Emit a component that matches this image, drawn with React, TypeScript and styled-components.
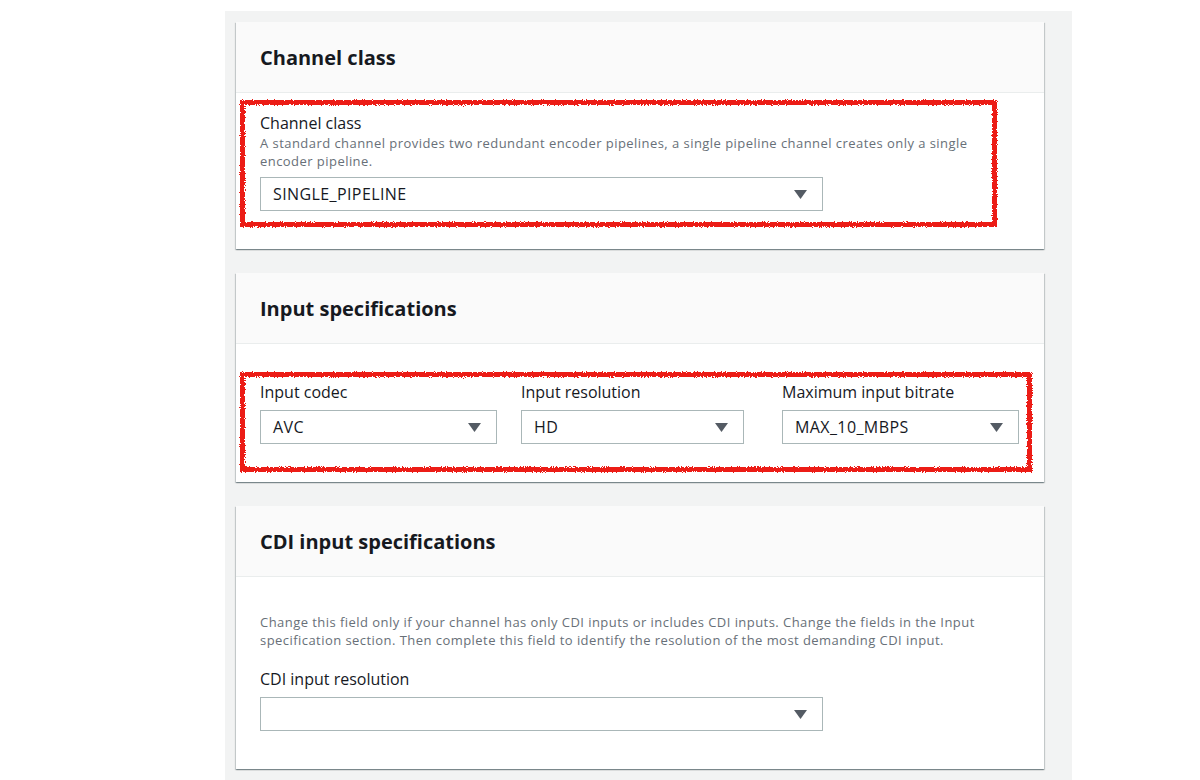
import React from "react";
import styled, { createGlobalStyle } from "styled-components";

const GlobalStyle = createGlobalStyle`
  body {
    margin: 0;
    background: #ffffff;
    font-family: "Open Sans", "Noto Sans", sans-serif;
    color: #16191f;
  }
`;

const Page = styled.div`
  display: flex;
  padding: 11px 0 0 225px;
`;

const Panel = styled.div`
  width: 847px;
  box-sizing: border-box;
  background: #f2f3f3;
  padding: 11px 28px 24px 11px;
  display: flex;
  flex-direction: column;
  gap: 24px;
`;

const Card = styled.section`
  background: #ffffff;
  box-shadow: 0 1px 1px 0 rgba(0, 28, 36, 0.3),
    1px 1px 1px 0 rgba(0, 28, 36, 0.15), -1px 1px 1px 0 rgba(0, 28, 36, 0.15);
`;

const CardHeader = styled.header`
  height: 71px;
  box-sizing: border-box;
  display: flex;
  align-items: center;
  padding: 0 24px;
  background: #fafafa;
  border-bottom: 1px solid #eaeded;
`;

const Title = styled.h2`
  margin: 0;
  font-size: 20px;
  font-weight: 700;
  color: #16191f;
`;

const CardBody = styled.div<{ $pad: string }>`
  padding: ${(p) => p.$pad};
`;

const Highlight = styled.div<{ $pad: string }>`
  position: relative;
  padding: ${(p) => p.$pad};
  &::before {
    content: "";
    position: absolute;
    inset: 0;
    border: 5px solid #ec1d14;
    filter: url(#rough);
    pointer-events: none;
  }
`;

const Field = styled.div`
  display: flex;
  flex-direction: column;
`;

const Label = styled.label`
  font-size: 16px;
  line-height: 22px;
  color: #16191f;
`;

const Description = styled.p<{ $mb?: number }>`
  margin: 0 0 ${(p) => p.$mb ?? 0}px;
  font-size: 13px;
  letter-spacing: 0.45px;
  line-height: 18px;
  color: #687078;
`;

const SelectBox = styled.div<{ $width: number }>`
  margin-top: 7px;
  width: ${(p) => p.$width}px;
  height: 34px;
  box-sizing: border-box;
  border: 1px solid #aab7b8;
  display: flex;
  align-items: center;
  justify-content: space-between;
  padding: 0 15px 0 12px;
  font-size: 16px;
  letter-spacing: 0.4px;
  color: #16191f;
  background: #fff;
`;

const ThreeCols = styled.div`
  display: grid;
  grid-template-columns: 237px 237px 237px;
  column-gap: 24px;
`;

const Caret = () => (
  <svg width="13" height="9" viewBox="0 0 13 9">
    <polygon points="0,0 13,0 6.5,9" fill="#545b64" />
  </svg>
);

const Select = ({ value, width }: { value: string; width: number }) => (
  <SelectBox $width={width}>
    <span>{value}</span>
    <Caret />
  </SelectBox>
);

export default function App() {
  return (
    <>
      <GlobalStyle />
      <svg width="0" height="0" style={{ position: "absolute" }}>
        <filter id="rough">
          <feTurbulence type="fractalNoise" baseFrequency="0.9" numOctaves="2" result="n" />
          <feDisplacementMap in="SourceGraphic" in2="n" scale="4" />
        </filter>
      </svg>
      <Page>
        <Panel>
          <Card>
            <CardHeader>
              <Title>Channel class</Title>
            </CardHeader>
            <CardBody $pad="7px 47px 22px 4px">
              <Highlight $pad="12px 4px 16px 20px">
                <Field>
                  <Label>Channel class</Label>
                  <Description>
                    A standard channel provides two redundant encoder pipelines, a single pipeline channel creates only a single encoder pipeline.
                  </Description>
                  <Select value="SINGLE_PIPELINE" width={563} />
                </Field>
              </Highlight>
            </CardBody>
          </Card>

          <Card>
            <CardHeader>
              <Title>Input specifications</Title>
            </CardHeader>
            <CardBody $pad="28px 12px 10px 4px">
              <Highlight $pad="9px 13px 28px 20px">
                <ThreeCols>
                  <Field>
                    <Label>Input codec</Label>
                    <Select value="AVC" width={237} />
                  </Field>
                  <Field>
                    <Label>Input resolution</Label>
                    <Select value="HD" width={223} />
                  </Field>
                  <Field>
                    <Label>Maximum input bitrate</Label>
                    <Select value="MAX_10_MBPS" width={237} />
                  </Field>
                </ThreeCols>
              </Highlight>
            </CardBody>
          </Card>

          <Card>
            <CardHeader>
              <Title>CDI input specifications</Title>
            </CardHeader>
            <CardBody $pad="36px 24px 38px 24px">
              <Description $mb={19}>
                Change this field only if your channel has only CDI inputs or includes CDI inputs. Change the fields in the Input specification section. Then complete this field to identify the resolution of the most demanding CDI input.
              </Description>
              <Field>
                <Label>CDI input resolution</Label>
                <Select value="" width={563} />
              </Field>
            </CardBody>
          </Card>
        </Panel>
      </Page>
    </>
  );
}
